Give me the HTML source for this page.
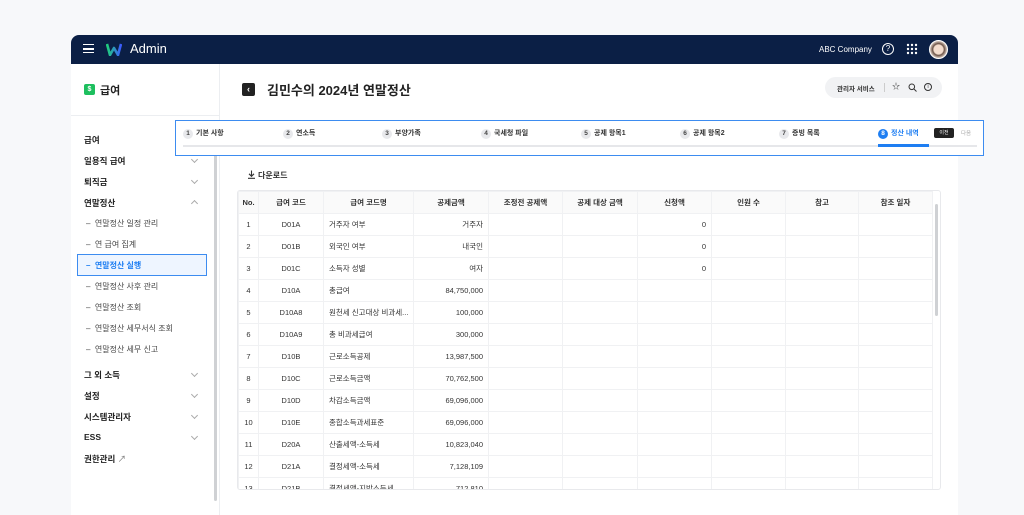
<!DOCTYPE html>
<html><head><meta charset="utf-8"><style>
*{margin:0;padding:0;box-sizing:border-box}
body{width:1024px;height:515px;overflow:hidden;background:#f7f8fa;font-family:"Liberation Sans","Noto Sans CJK KR",sans-serif;color:#222;position:relative}
.a{position:absolute;white-space:nowrap}
.hdr{left:71px;top:35px;width:887px;height:29px;background:#0b1f45;border-radius:8px 8px 0 0}
.side{left:71px;top:64px;width:149px;height:451px;background:#fff;border-right:1px solid #eceef1}
.main{left:220px;top:64px;width:738px;height:451px;background:#fff}
.si{font-size:8.5px;font-weight:bold;color:#222;left:84px}
.sub{font-size:8px;color:#444;left:86px}
.chev{left:192px;width:5px;height:5px;border-right:1px solid #aaa;border-bottom:1px solid #aaa;transform:rotate(45deg)}
.chevu{transform:rotate(-135deg)}
.step{font-size:7px;font-weight:bold;color:#333;top:128px}
.step b{display:inline-block;width:10px;height:10px;border-radius:5px;background:#e8e9ec;color:#444;font-size:6.5px;text-align:center;line-height:10px;margin-right:3px}
table{border-collapse:collapse;font-size:7.5px;color:#333}
td,th{border:1px solid #f0f1f3;height:22px;padding:0 5px;line-height:1;vertical-align:middle;overflow:hidden;white-space:nowrap}
th{font-weight:bold;background:#fafafa;text-align:center}
td.c{text-align:center}td.r{text-align:right}
</style></head><body>
<div class="a hdr"></div>
<div class="a" style="left:83px;top:44px;width:11px;height:9px;border-top:1.5px solid #fff;border-bottom:1.5px solid #fff"></div>
<div class="a" style="left:83px;top:48px;width:11px;height:1.5px;background:#fff"></div>
<svg class="a" style="left:106px;top:43px" width="16" height="13" viewBox="0 0 16 13"><defs><linearGradient id="g" x1="0" x2="1"><stop offset="0" stop-color="#1fd17a"/><stop offset="1" stop-color="#3b5bff"/></linearGradient></defs><path d="M1 1 L4 12 L8 5 L12 12 L15 1" fill="none" stroke="url(#g)" stroke-width="2.6" stroke-linejoin="round"/></svg>
<div class="a" style="left:130px;top:41px;font-size:13px;color:#fff">Admin</div>
<div class="a" style="left:819px;top:45px;font-size:8px;color:#fff">ABC Company</div>
<div class="a" style="left:882px;top:43px;width:12px;height:12px;border:1.3px solid #fff;border-radius:50%;color:#fff;font-size:8px;text-align:center;line-height:10px">?</div>
<svg class="a" style="left:906px;top:43px" width="12" height="12"><g fill="#fff"><circle cx="2" cy="2" r="1.2"/><circle cx="6" cy="2" r="1.2"/><circle cx="10" cy="2" r="1.2"/><circle cx="2" cy="6" r="1.2"/><circle cx="6" cy="6" r="1.2"/><circle cx="10" cy="6" r="1.2"/><circle cx="2" cy="10" r="1.2"/><circle cx="6" cy="10" r="1.2"/><circle cx="10" cy="10" r="1.2"/></g></svg>
<div class="a" style="left:929px;top:40px;width:19px;height:19px;border-radius:50%;background:radial-gradient(ellipse at 50% 50%,#f3dccd 38%,#6a5246 48%,#d9c9bf 70%);border:1px solid #fff"></div>

<div class="a side"></div>
<div class="a" style="left:214px;top:125px;width:3px;height:376px;background:#cfd1d4;border-radius:2px"></div>
<div class="a" style="left:84px;top:84px;width:11px;height:11px;border-radius:2px;background:#1dbf5e;color:#fff;font-size:7px;text-align:center;line-height:11px;font-weight:bold">$</div>
<div class="a" style="left:100px;top:82px;font-size:11px;font-weight:bold">급여</div>
<div class="a" style="left:71px;top:115px;width:148px;height:1px;background:#eceef1"></div>
<div class="a si" style="top:134px">급여</div>
<div class="a si" style="top:155px">일용직 급여</div><div class="a chev" style="top:157px"></div>
<div class="a si" style="top:176px">퇴직금</div><div class="a chev" style="top:178px"></div>
<div class="a si" style="top:197px">연말정산</div><div class="a chev chevu" style="top:201px"></div>
<div class="a sub" style="top:218px">–&nbsp; 연말정산 일정 관리</div>
<div class="a sub" style="top:239px">–&nbsp; 연 급여 집계</div>
<div class="a" style="left:77px;top:254px;width:130px;height:22px;background:#eef5ff;border:1px solid #3d8cf0"></div>
<div class="a sub" style="top:260px;color:#1e7ef2;font-weight:bold">–&nbsp; 연말정산 실행</div>
<div class="a sub" style="top:281px">–&nbsp; 연말정산 사후 관리</div>
<div class="a sub" style="top:302px">–&nbsp; 연말정산 조회</div>
<div class="a sub" style="top:323px">–&nbsp; 연말정산 세무서식 조회</div>
<div class="a sub" style="top:344px">–&nbsp; 연말정산 세무 신고</div>
<div class="a si" style="top:369px">그 외 소득</div><div class="a chev" style="top:371px"></div>
<div class="a si" style="top:390px">설정</div><div class="a chev" style="top:392px"></div>
<div class="a si" style="top:411px">시스템관리자</div><div class="a chev" style="top:413px"></div>
<div class="a si" style="top:432px">ESS</div><div class="a chev" style="top:434px"></div>
<div class="a si" style="top:453px">권한관리 <span style="color:#777;font-weight:normal">↗</span></div>

<div class="a main"></div>
<div class="a" style="left:242px;top:83px;width:13px;height:13px;border-radius:2px;background:#222;color:#fff;font-size:9px;text-align:center;line-height:12px;font-weight:bold">‹</div>
<div class="a" style="left:267px;top:80px;font-size:13px;font-weight:bold;color:#222">김민수의 2024년 연말정산</div>
<div class="a" style="left:825px;top:77px;width:117px;height:21px;border-radius:11px;background:#f1f2f4"></div>
<div class="a" style="left:837px;top:83px;font-size:6.5px;font-weight:bold;color:#333">관리자 서비스</div>
<div class="a" style="left:884px;top:83px;width:1px;height:9px;background:#ccc"></div>
<div class="a" style="left:892px;top:81px;font-size:8px;color:#333">☆</div>
<svg class="a" style="left:908px;top:83px" width="9" height="9"><circle cx="3.8" cy="3.8" r="2.8" fill="none" stroke="#333" stroke-width="1"/><path d="M6 6L8.5 8.5" stroke="#333"/></svg>
<div class="a" style="left:924px;top:83px;width:8px;height:8px;border:1px solid #333;border-radius:50%;font-size:5px;text-align:center;line-height:6px">i</div>

<div class="a" style="left:175px;top:120px;width:809px;height:36px;border:1.5px solid #3d8cf0;background:#fff"></div>
<div class="a" style="left:183px;top:145px;width:794px;height:2px;background:#e6e7ea"></div>
<div class="a" style="left:878px;top:144px;width:51px;height:3px;background:#1e7ef2"></div>
<div class="a step" style="left:183px"><b>1</b>기본 사항</div>
<div class="a step" style="left:283px"><b>2</b>연소득</div>
<div class="a step" style="left:382px"><b>3</b>부양가족</div>
<div class="a step" style="left:481px"><b>4</b>국세청 파일</div>
<div class="a step" style="left:581px"><b>5</b>공제 항목1</div>
<div class="a step" style="left:680px"><b>6</b>공제 항목2</div>
<div class="a step" style="left:779px"><b>7</b>증빙 목록</div>
<div class="a step" style="left:878px;color:#1e7ef2"><b style="background:#1e7ef2;color:#fff">8</b>정산 내역</div>
<div class="a" style="left:934px;top:128px;width:20px;height:10px;background:#222;border-radius:2px;color:#fff;font-size:5px;text-align:center;line-height:10px">이전</div>
<div class="a" style="left:961px;top:129px;font-size:5.5px;color:#aaa">다음</div>

<svg class="a" style="left:247px;top:170px" width="9" height="9"><path d="M4.5 0.5V6M2 3.8L4.5 6.3L7 3.8M1 8.3H8" fill="none" stroke="#333" stroke-width="1.1"/></svg>
<div class="a" style="left:258px;top:170px;font-size:8px;font-weight:bold;color:#333">다운로드</div>

<div class="a" style="left:237px;top:190px;width:704px;height:300px;border:1px solid #e8e9ec;border-radius:3px;overflow:hidden;background:#fff">
<table style="width:694px;table-layout:fixed">
<colgroup><col style="width:20px"><col style="width:65px"><col style="width:90px"><col style="width:75px"><col style="width:74px"><col style="width:75px"><col style="width:74px"><col style="width:74px"><col style="width:73px"><col style="width:74px"></colgroup>
<tr><th style="padding:0">No.</th><th>급여 코드</th><th>급여 코드명</th><th>공제금액</th><th>조정전 공제액</th><th>공제 대상 금액</th><th>신청액</th><th>인원 수</th><th>참고</th><th>참조 일자</th></tr>
<tr><td class="c">1</td><td class="c">D01A</td><td>거주자 여부</td><td class="r">거주자</td><td></td><td></td><td class="r">0</td><td></td><td></td><td></td></tr>
<tr><td class="c">2</td><td class="c">D01B</td><td>외국인 여부</td><td class="r">내국인</td><td></td><td></td><td class="r">0</td><td></td><td></td><td></td></tr>
<tr><td class="c">3</td><td class="c">D01C</td><td>소득자 성별</td><td class="r">여자</td><td></td><td></td><td class="r">0</td><td></td><td></td><td></td></tr>
<tr><td class="c">4</td><td class="c">D10A</td><td>총급여</td><td class="r">84,750,000</td><td></td><td></td><td></td><td></td><td></td><td></td></tr>
<tr><td class="c">5</td><td class="c">D10A8</td><td>원천세 신고대상 비과세...</td><td class="r">100,000</td><td></td><td></td><td></td><td></td><td></td><td></td></tr>
<tr><td class="c">6</td><td class="c">D10A9</td><td>총 비과세급여</td><td class="r">300,000</td><td></td><td></td><td></td><td></td><td></td><td></td></tr>
<tr><td class="c">7</td><td class="c">D10B</td><td>근로소득공제</td><td class="r">13,987,500</td><td></td><td></td><td></td><td></td><td></td><td></td></tr>
<tr><td class="c">8</td><td class="c">D10C</td><td>근로소득금액</td><td class="r">70,762,500</td><td></td><td></td><td></td><td></td><td></td><td></td></tr>
<tr><td class="c">9</td><td class="c">D10D</td><td>차감소득금액</td><td class="r">69,096,000</td><td></td><td></td><td></td><td></td><td></td><td></td></tr>
<tr><td class="c" style="padding:0">10</td><td class="c">D10E</td><td>종합소득과세표준</td><td class="r">69,096,000</td><td></td><td></td><td></td><td></td><td></td><td></td></tr>
<tr><td class="c" style="padding:0">11</td><td class="c">D20A</td><td>산출세액-소득세</td><td class="r">10,823,040</td><td></td><td></td><td></td><td></td><td></td><td></td></tr>
<tr><td class="c" style="padding:0">12</td><td class="c">D21A</td><td>결정세액-소득세</td><td class="r">7,128,109</td><td></td><td></td><td></td><td></td><td></td><td></td></tr>
<tr><td class="c" style="padding:0">13</td><td class="c">D21B</td><td>결정세액-지방소득세</td><td class="r">712,810</td><td></td><td></td><td></td><td></td><td></td><td></td></tr>
</table>
<div class="a" style="left:697px;top:13px;width:3px;height:112px;background:#cfd1d4;border-radius:2px"></div>
</div>
</body></html>
